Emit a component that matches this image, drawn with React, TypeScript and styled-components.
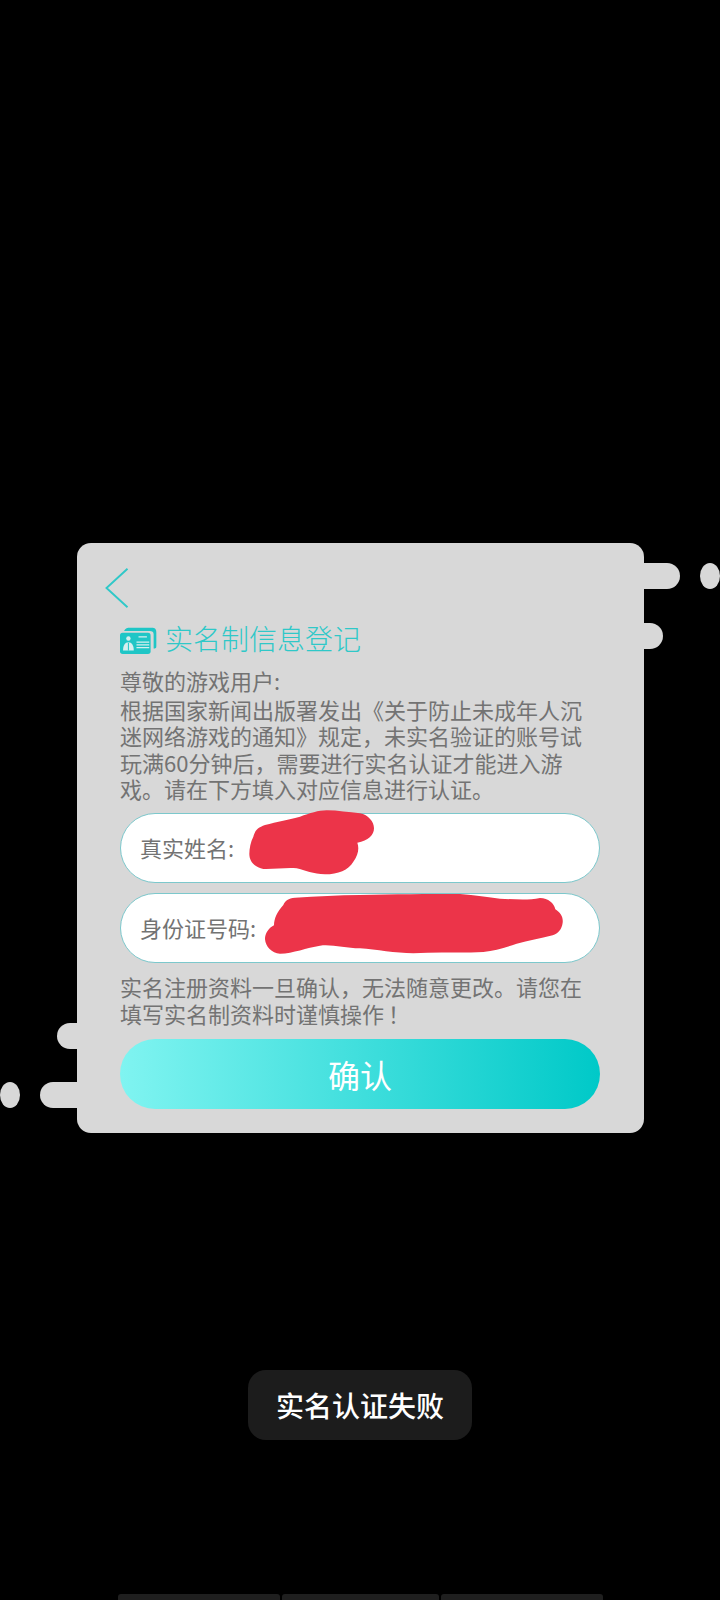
import React from "react";
import styled, { createGlobalStyle } from "styled-components";

const Global = createGlobalStyle`
  html, body { margin: 0; padding: 0; background: #000; }
  * { box-sizing: border-box; }
`;

const Page = styled.div`
  width: 720px;
  height: 1600px;
  background: #000;
  display: flex;
  flex-direction: column;
  align-items: flex-start;
  padding-top: 543px;
  overflow: hidden;
  font-family: "Noto Sans CJK SC", "Noto Sans", sans-serif;
  text-spacing-trim: space-all;
  font-feature-settings: "palt" 0, "chws" 0, "halt" 0;
`;

const Card = styled.section`
  position: relative;
  margin-left: 77px;
  width: 567px;
  height: 591px;
  background: #d8d8d8;
  border-radius: 14px;
  padding: 25px 43px 0;
  display: flex;
  flex-direction: column;
`;

const Tab = styled.span<{ $side: "left" | "right"; $top: number; $len: number }>`
  position: absolute;
  top: ${(p) => p.$top}px;
  ${(p) => p.$side}: ${(p) => -p.$len}px;
  width: ${(p) => p.$len + 10}px;
  height: 26px;
  background: #d8d8d8;
  border-radius: ${(p) => (p.$side === "right" ? "0 13px 13px 0" : "13px 0 0 13px")};
`;

const Dot = styled.span<{ $left: number; $top: number }>`
  position: absolute;
  left: ${(p) => p.$left}px;
  top: ${(p) => p.$top}px;
  width: 20px;
  height: 26px;
  background: #d8d8d8;
  border-radius: 50%;
`;

const BackButton = styled.button`
  display: block;
  margin: 0 0 0 -15px;
  padding: 0;
  border: 0;
  background: none;
  width: 24px;
  height: 40px;
`;

const TitleRow = styled.h1`
  margin: 10px 0 0;
  display: flex;
  align-items: center;
  gap: 8px;
  height: 44px;
  font-size: 28px;
  font-weight: 300;
  line-height: 44px;
  color: #2fc8c8;
`;

const TitleText = styled.span`
  margin-bottom: 4px;
`;

const Paragraph = styled.p<{ $top: number }>`
  margin: ${(p) => p.$top}px 0 0;
  font-size: 22px;
  line-height: 26.6px;
  font-weight: 400;
  color: #737373;
  white-space: nowrap;
`;

const Greeting = styled.span`
  display: block;
  margin-bottom: 2px;
`;

const Bang = styled.span`
  margin-left: 4px;
`;

const Field = styled.div<{ $top: number }>`
  margin-top: ${(p) => p.$top}px;
  width: 480px;
  height: 70px;
  flex: none;
  display: flex;
  align-items: center;
  padding: 0 0 2px 19px;
  background: #fff;
  border: 1px solid #7cc8cc;
  border-radius: 35px;
  font-size: 22px;
  color: #737373;
`;

const Confirm = styled.button`
  margin-top: 13px;
  width: 480px;
  height: 70px;
  flex: none;
  border: 0;
  border-radius: 35px;
  background: linear-gradient(90deg, #80f4f1 0%, #00c9c8 100%);
  color: #fff;
  font-family: inherit;
  font-size: 32px;
  font-weight: 400;
`;

const Scribble = styled.svg`
  position: absolute;
  left: 23px;
  top: 237px;
  width: 500px;
  height: 180px;
  pointer-events: none;
`;

const Toast = styled.div`
  margin: 237px 0 0 248px;
  width: 224px;
  height: 70px;
  flex: none;
  background: #1c1c1c;
  border-radius: 18px;
  color: #fff;
  font-size: 28px;
  font-weight: 500;
  display: flex;
  align-items: center;
  justify-content: center;
`;

const BottomBars = styled.div`
  margin: 154px 0 0 118px;
  display: flex;
  gap: 2px;
  height: 6px;
  flex: none;
`;

const BottomBar = styled.span<{ $w: number }>`
  width: ${(p) => p.$w}px;
  background: #1f1f1f;
  border-radius: 3px 3px 0 0;
`;

const CardIcon = () => (
  <svg width="37" height="27" viewBox="0 0 110 80" fill="none" style={{ flex: "none" }}>
    <path d="M12 12C16 3 22 2 30 2H94C104 2 108 6 108 16V58C108 62 106 64 100 64V22C100 14 96 12 88 12Z" fill="#1fc6c6" />
    <rect x="0" y="17" width="91" height="63" rx="8" fill="#1fc6c6" />
    <circle cx="25" cy="34" r="6.5" fill="#d7efef" />
    <path d="M9 70C9 54 15 45 25 45S41 54 41 70Z" fill="#d7efef" />
    <path d="M25 47V70" stroke="#1fc6c6" strokeWidth="3" />
    <path d="M55 29H80M49 45H87M49 53H87M49 61H87" stroke="#d7efef" strokeWidth="4" />
  </svg>
);

export default function App() {
  return (
    <Page>
      <Global />
      <Card>
        <Tab $side="right" $top={20} $len={36} />
        <Dot $left={623} $top={20} />
        <Tab $side="right" $top={80} $len={19} />
        <Tab $side="left" $top={480} $len={20} />
        <Tab $side="left" $top={539} $len={37} />
        <Dot $left={-77} $top={539} />

        <BackButton aria-label="返回">
          <svg width="24" height="40" viewBox="0 0 24 40" fill="none">
            <path d="M22.5 0.8L1.5 20L22.5 39.2" stroke="#2fc8c8" strokeWidth="1.9" />
          </svg>
        </BackButton>
        <TitleRow>
          <CardIcon />
          <TitleText>实名制信息登记</TitleText>
        </TitleRow>
        <Paragraph $top={5}>
          <Greeting>尊敬的游戏用户:</Greeting>
          根据国家新闻出版署发出《关于防止未成年人沉
          <br />
          迷网络游戏的通知》规定，未实名验证的账号试
          <br />
          玩满60分钟后，需要进行实名认证才能进入游
          <br />
          戏。请在下方填入对应信息进行认证。
        </Paragraph>
        <Field $top={11}>真实姓名:</Field>
        <Field $top={10}>身份证号码:</Field>
        <Paragraph $top={10}>
          实名注册资料一旦确认，无法随意更改。请您在
          <br />
          填写实名制资料时谨慎操作<Bang>！</Bang>
        </Paragraph>
        <Confirm>确认</Confirm>

        <Scribble viewBox="0 0 1500 540">
          <path
            fill="#ec3449"
            d="M460 170C465 150 475 142 495 135C530 125 570 118 600 110C630 100 655 91 680 91C715 91 745 97 780 100C805 105 822 125 822 145C822 165 805 182 772 188C778 205 775 225 760 245C745 270 715 283 675 283C640 283 615 270 590 265C560 262 525 268 490 267C465 262 448 245 448 222C448 205 452 185 460 170Z"
          />
          <path
            fill="#ec3449"
            d="M550 375C555 362 565 355 585 353C650 350 715 345 780 345C880 342 985 342 1080 342C1125 345 1165 352 1200 356C1240 358 1285 362 1320 354C1345 354 1362 370 1366 388C1382 398 1390 412 1388 428C1385 448 1375 460 1358 466C1320 475 1285 482 1250 491C1215 503 1185 512 1150 516C1080 520 1010 515 940 520C885 520 830 508 780 505C735 505 695 492 660 497C620 503 580 520 540 521C515 520 497 500 495 478C495 460 505 445 522 436C522 415 532 395 550 375Z"
          />
        </Scribble>
      </Card>
      <Toast>实名认证失败</Toast>
      <BottomBars>
        <BottomBar $w={162} />
        <BottomBar $w={157} />
        <BottomBar $w={162} />
      </BottomBars>
    </Page>
  );
}
